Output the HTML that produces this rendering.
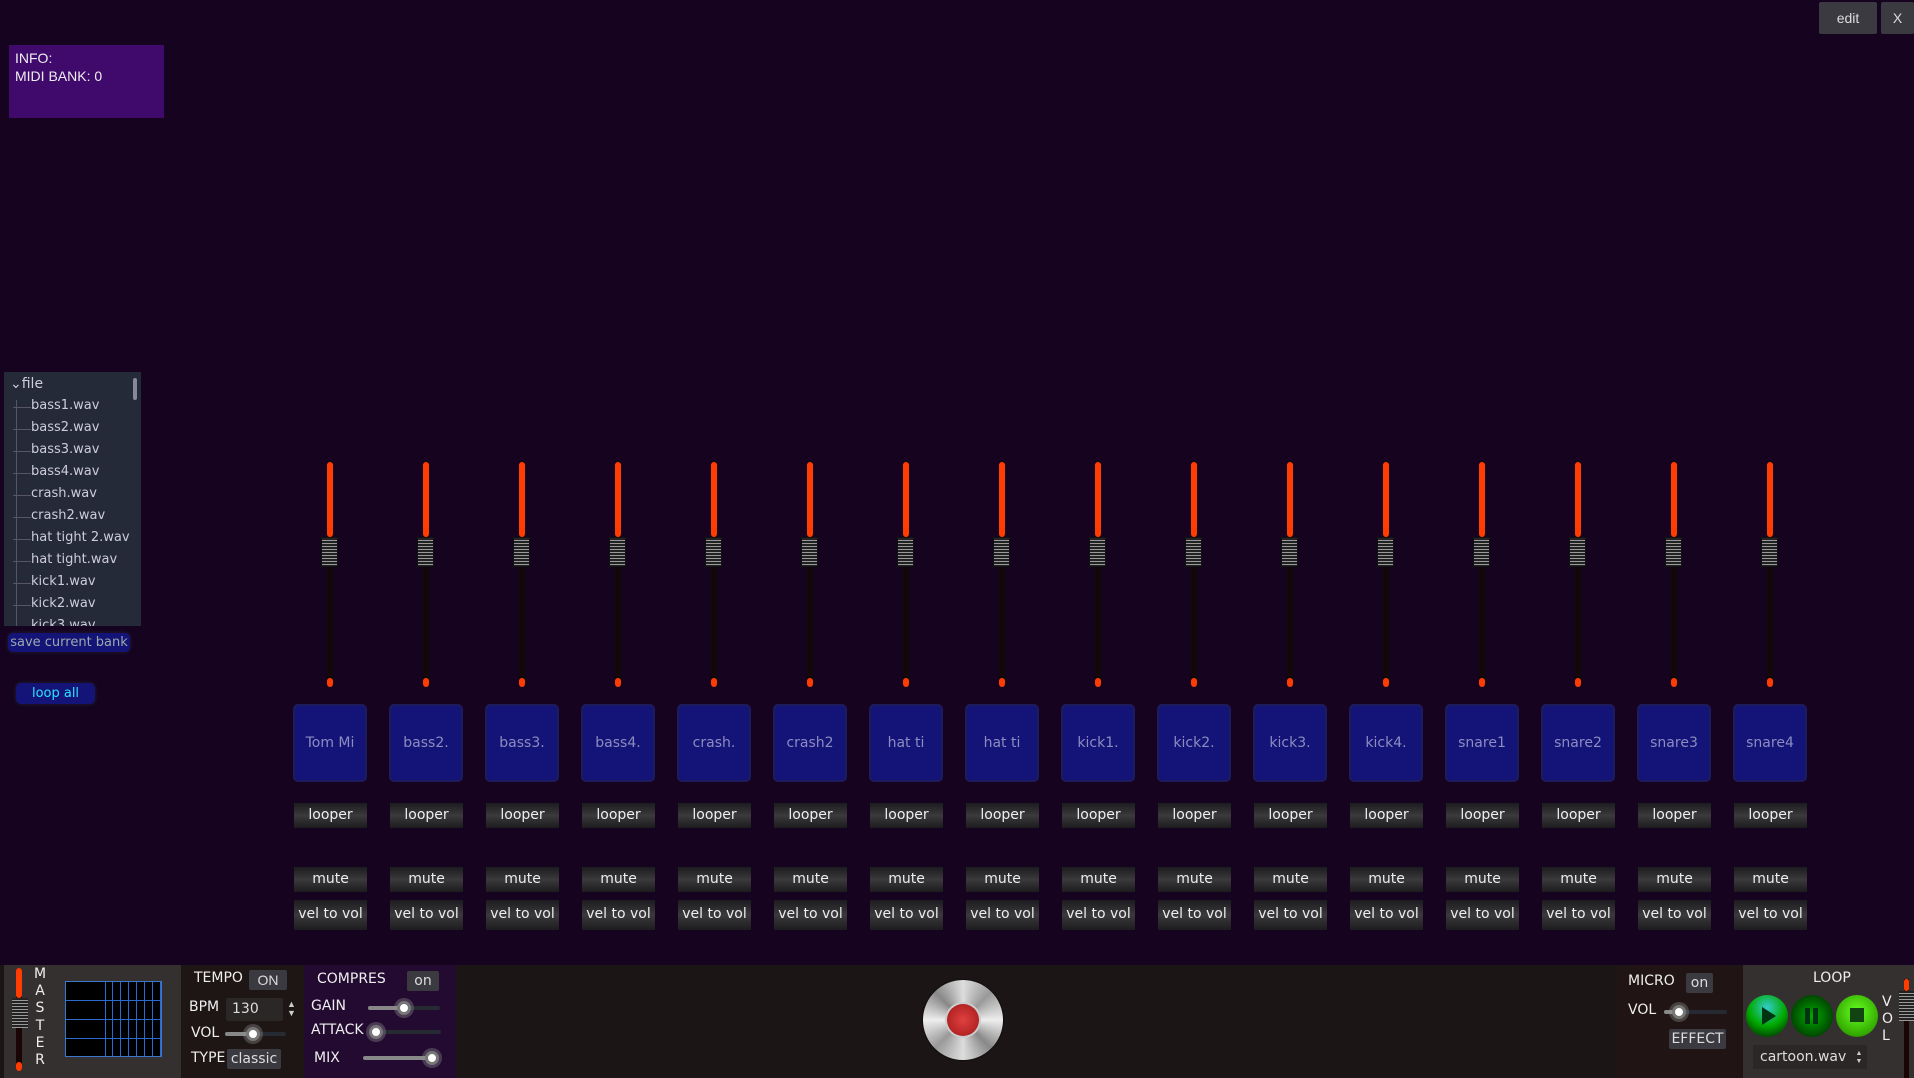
<!DOCTYPE html>
<html><head><meta charset="utf-8"><style>
*{margin:0;padding:0;box-sizing:border-box}
body{width:1914px;height:1078px;background:#150320;font-family:"Liberation Sans","DejaVu Sans",sans-serif;position:relative;overflow:hidden;color:#ddd}
.a{position:absolute}
.info{left:9px;top:45px;width:155px;height:73px;background:#400a6c;color:#eee;font-size:14px;padding:4px 6px;line-height:18px}
.btn{background:#3a3a40;color:#ddd;font-size:14px;text-align:center;border-radius:2px}
.tree{left:4px;top:372px;width:137px;height:254px;background:#252a38;overflow:hidden;font-family:"DejaVu Sans",sans-serif;font-size:13px;color:#ccd}
.tree div{position:absolute;left:27px}
.tree .ln{position:absolute;left:9px;width:18px;height:1px;background:#556}
.blue{background:#141478;color:#9aa;border-radius:5px;box-shadow:0 0 4px #223}
.ch{position:absolute;top:462px;width:74px}
.sl{position:absolute;left:34px;width:6px;top:0;height:225px;background:#120808;border-radius:3px}
.red{position:absolute;left:34px;top:0;width:6px;height:75px;background:#ff3d00;border-radius:3px}
.rb{position:absolute;left:34px;top:216px;width:6px;height:9px;background:#ff3d00;border-radius:3px}
.hd{position:absolute;left:28px;top:75px;width:17px;height:30px;background:repeating-linear-gradient(#222 0 2px,#999 2px 3px);border:1px solid #111}
.pad{position:absolute;top:242px;left:0;width:74px;height:78px;background:#141478;border:2px solid #1c1c5c;border-radius:5px;color:#8c8cc0;font-family:"DejaVu Sans",sans-serif;font-size:14px;text-align:center;line-height:74px}
.sb{position:absolute;left:1px;width:73px;height:25px;background:linear-gradient(#1c1c20,#3a3a3c 50%,#1c1c1e);color:#eee;font-family:"DejaVu Sans",sans-serif;font-size:14px;text-align:center;line-height:24px}
.pl{font-family:"DejaVu Sans",sans-serif;font-size:14px;color:#eee}
.tr{height:4px;background:#252a33;border-radius:2px}
.kn{width:14px;height:14px;border-radius:50%;background:#fff;border:3px solid #777;box-shadow:0 0 0 3px rgba(150,150,150,.35)}
</style></head><body>
<div class="a info">INFO:<br>MIDI BANK: 0</div>
<div class="a btn" style="left:1819px;top:2px;width:58px;height:32px;line-height:32px">edit</div>
<div class="a btn" style="left:1881px;top:2px;width:33px;height:32px;line-height:32px">X</div>

<div class="a tree">
<div style="left:6px;top:4px;font-size:14px">⌄file</div>
<span style="position:absolute;left:12px;top:28px;width:1px;height:230px;background:#556"></span>
<span style="position:absolute;left:129px;top:6px;width:4px;height:22px;background:#889;border-radius:2px"></span>
<span class="ln" style="top:35px"></span><div style="top:26px">bass1.wav</div>
<span class="ln" style="top:57px"></span><div style="top:48px">bass2.wav</div>
<span class="ln" style="top:79px"></span><div style="top:70px">bass3.wav</div>
<span class="ln" style="top:101px"></span><div style="top:92px">bass4.wav</div>
<span class="ln" style="top:123px"></span><div style="top:114px">crash.wav</div>
<span class="ln" style="top:145px"></span><div style="top:136px">crash2.wav</div>
<span class="ln" style="top:167px"></span><div style="top:158px">hat tight 2.wav</div>
<span class="ln" style="top:189px"></span><div style="top:180px">hat tight.wav</div>
<span class="ln" style="top:211px"></span><div style="top:202px">kick1.wav</div>
<span class="ln" style="top:233px"></span><div style="top:224px">kick2.wav</div>
<span class="ln" style="top:255px"></span><div style="top:246px">kick3.wav</div>
</div>
<div class="a blue" style="left:8px;top:633px;width:122px;height:19px;font-size:13px;line-height:19px;text-align:center;font-family:'DejaVu Sans',sans-serif">save current bank</div>
<div class="a blue" style="left:16px;top:683px;width:79px;height:21px;font-size:13px;line-height:21px;text-align:center;color:#2de0ff;font-family:'DejaVu Sans',sans-serif">loop all</div>

<div class="ch" style="left:293px"><div class="sl"></div><div class="red"></div><div class="rb"></div><div class="hd"></div><div class="pad">Tom Mi</div><div class="sb" style="top:341px">looper</div><div class="sb" style="top:405px">mute</div><div class="sb" style="top:438px;height:30px;line-height:28px">vel to vol</div></div>
<div class="ch" style="left:389px"><div class="sl"></div><div class="red"></div><div class="rb"></div><div class="hd"></div><div class="pad">bass2.</div><div class="sb" style="top:341px">looper</div><div class="sb" style="top:405px">mute</div><div class="sb" style="top:438px;height:30px;line-height:28px">vel to vol</div></div>
<div class="ch" style="left:485px"><div class="sl"></div><div class="red"></div><div class="rb"></div><div class="hd"></div><div class="pad">bass3.</div><div class="sb" style="top:341px">looper</div><div class="sb" style="top:405px">mute</div><div class="sb" style="top:438px;height:30px;line-height:28px">vel to vol</div></div>
<div class="ch" style="left:581px"><div class="sl"></div><div class="red"></div><div class="rb"></div><div class="hd"></div><div class="pad">bass4.</div><div class="sb" style="top:341px">looper</div><div class="sb" style="top:405px">mute</div><div class="sb" style="top:438px;height:30px;line-height:28px">vel to vol</div></div>
<div class="ch" style="left:677px"><div class="sl"></div><div class="red"></div><div class="rb"></div><div class="hd"></div><div class="pad">crash.</div><div class="sb" style="top:341px">looper</div><div class="sb" style="top:405px">mute</div><div class="sb" style="top:438px;height:30px;line-height:28px">vel to vol</div></div>
<div class="ch" style="left:773px"><div class="sl"></div><div class="red"></div><div class="rb"></div><div class="hd"></div><div class="pad">crash2</div><div class="sb" style="top:341px">looper</div><div class="sb" style="top:405px">mute</div><div class="sb" style="top:438px;height:30px;line-height:28px">vel to vol</div></div>
<div class="ch" style="left:869px"><div class="sl"></div><div class="red"></div><div class="rb"></div><div class="hd"></div><div class="pad">hat ti</div><div class="sb" style="top:341px">looper</div><div class="sb" style="top:405px">mute</div><div class="sb" style="top:438px;height:30px;line-height:28px">vel to vol</div></div>
<div class="ch" style="left:965px"><div class="sl"></div><div class="red"></div><div class="rb"></div><div class="hd"></div><div class="pad">hat ti</div><div class="sb" style="top:341px">looper</div><div class="sb" style="top:405px">mute</div><div class="sb" style="top:438px;height:30px;line-height:28px">vel to vol</div></div>
<div class="ch" style="left:1061px"><div class="sl"></div><div class="red"></div><div class="rb"></div><div class="hd"></div><div class="pad">kick1.</div><div class="sb" style="top:341px">looper</div><div class="sb" style="top:405px">mute</div><div class="sb" style="top:438px;height:30px;line-height:28px">vel to vol</div></div>
<div class="ch" style="left:1157px"><div class="sl"></div><div class="red"></div><div class="rb"></div><div class="hd"></div><div class="pad">kick2.</div><div class="sb" style="top:341px">looper</div><div class="sb" style="top:405px">mute</div><div class="sb" style="top:438px;height:30px;line-height:28px">vel to vol</div></div>
<div class="ch" style="left:1253px"><div class="sl"></div><div class="red"></div><div class="rb"></div><div class="hd"></div><div class="pad">kick3.</div><div class="sb" style="top:341px">looper</div><div class="sb" style="top:405px">mute</div><div class="sb" style="top:438px;height:30px;line-height:28px">vel to vol</div></div>
<div class="ch" style="left:1349px"><div class="sl"></div><div class="red"></div><div class="rb"></div><div class="hd"></div><div class="pad">kick4.</div><div class="sb" style="top:341px">looper</div><div class="sb" style="top:405px">mute</div><div class="sb" style="top:438px;height:30px;line-height:28px">vel to vol</div></div>
<div class="ch" style="left:1445px"><div class="sl"></div><div class="red"></div><div class="rb"></div><div class="hd"></div><div class="pad">snare1</div><div class="sb" style="top:341px">looper</div><div class="sb" style="top:405px">mute</div><div class="sb" style="top:438px;height:30px;line-height:28px">vel to vol</div></div>
<div class="ch" style="left:1541px"><div class="sl"></div><div class="red"></div><div class="rb"></div><div class="hd"></div><div class="pad">snare2</div><div class="sb" style="top:341px">looper</div><div class="sb" style="top:405px">mute</div><div class="sb" style="top:438px;height:30px;line-height:28px">vel to vol</div></div>
<div class="ch" style="left:1637px"><div class="sl"></div><div class="red"></div><div class="rb"></div><div class="hd"></div><div class="pad">snare3</div><div class="sb" style="top:341px">looper</div><div class="sb" style="top:405px">mute</div><div class="sb" style="top:438px;height:30px;line-height:28px">vel to vol</div></div>
<div class="ch" style="left:1733px"><div class="sl"></div><div class="red"></div><div class="rb"></div><div class="hd"></div><div class="pad">snare4</div><div class="sb" style="top:341px">looper</div><div class="sb" style="top:405px">mute</div><div class="sb" style="top:438px;height:30px;line-height:28px">vel to vol</div></div>

<!-- bottom bar -->
<div class="a" style="left:0;top:965px;width:1914px;height:113px;background:#1c1516"></div>
<div class="a" style="left:4px;top:965px;width:177px;height:113px;background:#353030"></div>
<div class="a" style="left:16px;top:968px;width:6px;height:103px;background:#1a0505;border-radius:3px"></div>
<div class="a" style="left:16px;top:968px;width:6px;height:30px;background:#ff3d00;border-radius:3px"></div>
<div class="a" style="left:16px;top:1062px;width:6px;height:9px;background:#ff3d00;border-radius:3px"></div>
<div class="a" style="left:12px;top:998px;width:16px;height:30px;background:repeating-linear-gradient(#222 0 2px,#999 2px 3px)"></div>
<div class="a pl" style="left:33px;top:966px;font-size:14px;line-height:17.2px;width:14px;text-align:center">M<br>A<br>S<br>T<br>E<br>R</div>
<div class="a" style="left:65px;top:981px;width:97px;height:76px;background:#000;border:1px solid #3a78d0;background-image:linear-gradient(90deg,transparent 39px,#2b6ad0 39px,#2b6ad0 40px,transparent 40px),repeating-linear-gradient(90deg,transparent 0 7px,#2b6ad0 7px 8px),repeating-linear-gradient(transparent 0 18px,#2b6ad0 18px 19px);background-size:100% 100%,58px 100%,100% 100%;background-position:0 0,39px 0,0 0;background-repeat:no-repeat"></div>

<div class="a" style="left:181px;top:965px;width:123px;height:113px;background:#1e1515"></div>
<div class="a pl" style="left:194px;top:970px">TEMPO</div>
<div class="a btn" style="left:249px;top:970px;width:38px;height:20px;line-height:20px;font-size:14px">ON</div>
<div class="a pl" style="left:189px;top:999px">BPM</div>
<div class="a" style="left:226px;top:998px;width:57px;height:23px;background:#2b2727;border-radius:2px;color:#ddd;font-size:14px;line-height:23px;padding-left:6px;font-family:'DejaVu Sans'">130</div>
<div class="a" style="left:287px;top:1000px;color:#ccc;font-size:9px;line-height:9px">▲<br>▼</div>
<div class="a pl" style="left:191px;top:1025px">VOL</div>
<div class="a tr" style="left:225px;top:1032px;width:61px"></div>
<div class="a tr" style="left:225px;top:1032px;width:30px;background:#888"></div>
<div class="a kn" style="left:246px;top:1027px"></div>
<div class="a pl" style="left:191px;top:1050px">TYPE</div>
<div class="a btn" style="left:227px;top:1049px;width:54px;height:20px;line-height:20px;font-family:'DejaVu Sans'">classic</div>

<div class="a" style="left:304px;top:965px;width:152px;height:113px;background:#230a30"></div>
<div class="a pl" style="left:317px;top:971px">COMPRES</div>
<div class="a btn" style="left:407px;top:971px;width:32px;height:20px;line-height:20px;font-family:'DejaVu Sans'">on</div>
<div class="a pl" style="left:311px;top:998px">GAIN</div>
<div class="a tr" style="left:368px;top:1006px;width:72px"></div>
<div class="a tr" style="left:368px;top:1006px;width:36px;background:#888"></div>
<div class="a kn" style="left:397px;top:1001px"></div>
<div class="a pl" style="left:311px;top:1022px">ATTACK</div>
<div class="a tr" style="left:369px;top:1030px;width:72px"></div>
<div class="a kn" style="left:369px;top:1025px"></div>
<div class="a pl" style="left:314px;top:1050px">MIX</div>
<div class="a tr" style="left:363px;top:1056px;width:74px;background:#888"></div>
<div class="a kn" style="left:425px;top:1051px"></div>

<div class="a" style="left:923px;top:980px;width:80px;height:80px;border-radius:50%;background:conic-gradient(#ddd,#999,#eee,#888,#ddd,#999,#eee,#888,#ddd);box-shadow:0 0 2px #000"></div>
<div class="a" style="left:947px;top:1004px;width:32px;height:32px;border-radius:50%;background:radial-gradient(#e04040,#a01818);box-shadow:0 0 0 2px #ccc"></div>

<div class="a" style="left:1617px;top:965px;width:126px;height:113px;background:#201414"></div>
<div class="a pl" style="left:1628px;top:973px">MICRO</div>
<div class="a btn" style="left:1686px;top:973px;width:27px;height:20px;line-height:20px;font-family:'DejaVu Sans'">on</div>
<div class="a pl" style="left:1628px;top:1002px">VOL</div>
<div class="a tr" style="left:1664px;top:1010px;width:63px"></div>
<div class="a tr" style="left:1664px;top:1010px;width:14px;background:#888"></div>
<div class="a kn" style="left:1672px;top:1005px"></div>
<div class="a btn" style="left:1669px;top:1029px;width:57px;height:20px;line-height:20px;font-family:'DejaVu Sans'">EFFECT</div>

<div class="a" style="left:1743px;top:965px;width:171px;height:113px;background:#353030"></div>
<div class="a pl" style="left:1813px;top:970px">LOOP</div>
<div class="a" style="left:1746px;top:995px;width:42px;height:42px;border-radius:50%;background:radial-gradient(circle at 50% 30%,#3cc,#0a0 50%,#030 90%)"></div>
<div class="a" style="left:1762px;top:1007px;width:0;height:0;border-left:14px solid #031;border-top:9px solid transparent;border-bottom:9px solid transparent"></div>
<div class="a" style="left:1791px;top:995px;width:42px;height:42px;border-radius:50%;background:radial-gradient(circle at 50% 50%,#0a0,#030 85%)"></div>
<div class="a" style="left:1805px;top:1008px;width:5px;height:16px;background:#031"></div>
<div class="a" style="left:1813px;top:1008px;width:5px;height:16px;background:#031"></div>
<div class="a" style="left:1836px;top:995px;width:42px;height:42px;border-radius:50%;background:radial-gradient(circle at 50% 40%,#6f2,#3a0 70%,#250)"></div>
<div class="a" style="left:1850px;top:1008px;width:14px;height:14px;background:#141"></div>
<div class="a" style="left:1753px;top:1045px;width:98px;height:24px;background:#2b2727;color:#ddd;font-size:14px;line-height:24px;padding-left:7px;font-family:'DejaVu Sans'">cartoon.wav</div>
<div class="a" style="left:1851px;top:1045px;width:16px;height:24px;background:#2b2727;color:#ccc;font-size:7px;line-height:8px;padding-top:5px;text-align:center">▲<br>▼</div>
<div class="a pl" style="left:1882px;top:994px;line-height:17px">V<br>O<br>L</div>
<div class="a" style="left:1904px;top:979px;width:5px;height:99px;background:#1a0505"></div>
<div class="a" style="left:1904px;top:979px;width:5px;height:12px;background:#ff3d00;border-radius:3px"></div>
<div class="a" style="left:1899px;top:991px;width:15px;height:30px;background:repeating-linear-gradient(#222 0 2px,#999 2px 3px)"></div>
</body></html>
